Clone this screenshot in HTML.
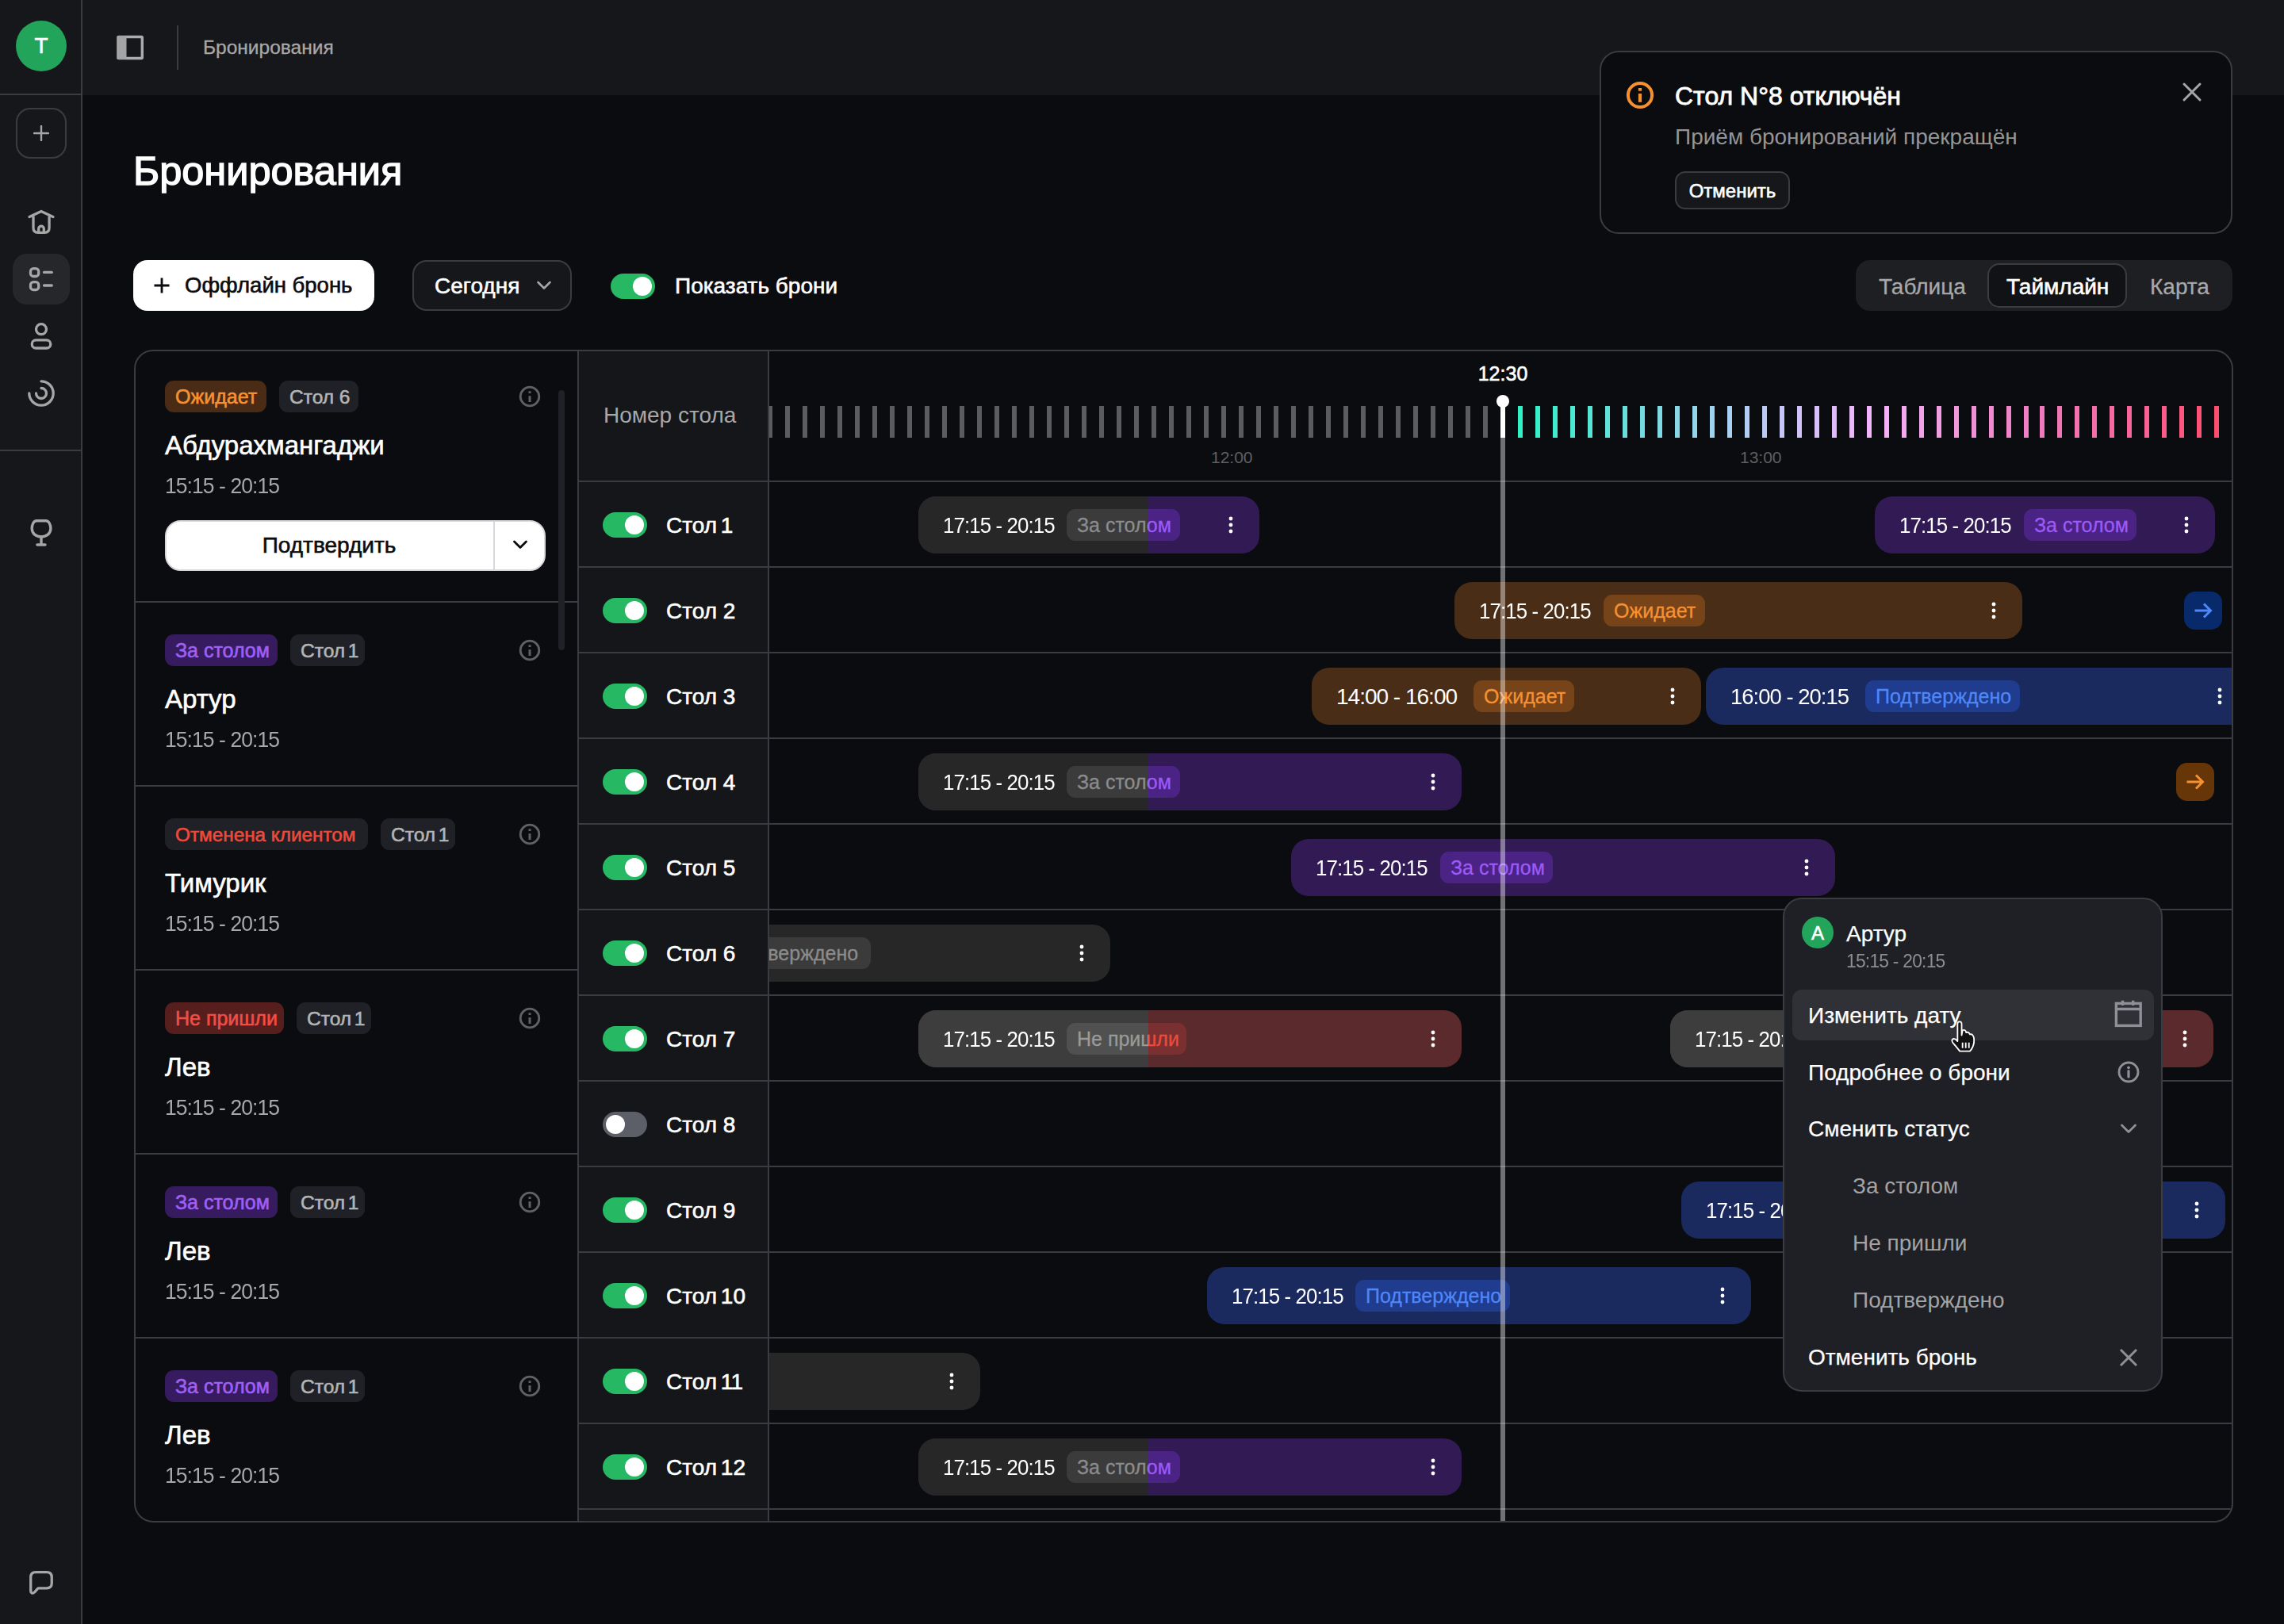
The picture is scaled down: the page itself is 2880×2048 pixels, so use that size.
<!DOCTYPE html>
<html><head><meta charset="utf-8"><style>
html,body{margin:0;padding:0;}
body{width:2880px;height:2048px;overflow:hidden;position:relative;background:#0b0c0f;font-family:"Liberation Sans", sans-serif;}
</style></head><body>
<div style="position:absolute;left:0px;top:0px;width:102px;height:2048px;background:#16171b;"></div>
<div style="position:absolute;left:102px;top:0px;width:2px;height:2048px;background:#3b3c41;"></div>
<div style="position:absolute;left:0px;top:118px;width:102px;height:2px;background:#3b3c41;"></div>
<div style="position:absolute;left:0px;top:567px;width:102px;height:2px;background:#3b3c41;"></div>
<div style="position:absolute;left:20px;top:26px;width:64px;height:64px;background:#22a55b;border-radius:50%;"></div>
<div style="position:absolute;left:-448px;width:1000px;text-align:center;top:44.3px;font-size:28px;line-height:28px;color:#fff;white-space:nowrap;-webkit-text-stroke:0.6px currentColor;">T</div>
<div style="position:absolute;left:20px;top:136px;width:64px;height:64px;box-sizing:border-box;border:2px solid #3b3c41;border-radius:18px;"></div>
<svg style="position:absolute;left:42px;top:158px;" width="20" height="20" viewBox="0 0 20 20" fill="none"><path d="M10 1V19M1 10H19" stroke="#a6a6a6" stroke-width="2.4" stroke-linecap="round"/></svg>
<svg style="position:absolute;left:35px;top:262px;" width="34" height="36" viewBox="0 0 34 36" fill="none"><path d="M2.1 11.6L16.95 4.5L31.9 11.6" stroke="#a6a6a6" stroke-width="3.3" stroke-linecap="round" stroke-linejoin="round"/><path d="M7 10.5V25.3Q7 31.3 13 31.3H21.1Q27.1 31.3 27.1 25.3V10.5" stroke="#a6a6a6" stroke-width="3.3"/><path d="M13.7 31.3V26.4A3.3 3.3 0 0 1 20.3 26.4V31.3" stroke="#a6a6a6" stroke-width="3.3"/></svg>
<div style="position:absolute;left:16px;top:320px;width:72px;height:64px;background:#26272b;border-radius:18px;"></div>
<svg style="position:absolute;left:35px;top:335px;" width="34" height="34" viewBox="0 0 34 34" fill="none"><rect x="3.5" y="3.6" width="10.2" height="9.9" rx="3.6" stroke="#a6a6a6" stroke-width="3.3"/><rect x="3.5" y="20.6" width="10.2" height="9.9" rx="3.6" stroke="#a6a6a6" stroke-width="3.3"/><path d="M20.5 8.4H30.3M20.5 25H30.3" stroke="#a6a6a6" stroke-width="3.3" stroke-linecap="round"/></svg>
<svg style="position:absolute;left:35px;top:405px;" width="34" height="40" viewBox="0 0 34 40" fill="none"><circle cx="17" cy="10.2" r="6.5" stroke="#a6a6a6" stroke-width="3.3"/><rect x="5.25" y="23.9" width="23.5" height="10.1" rx="5" stroke="#a6a6a6" stroke-width="3.3"/></svg>
<svg style="position:absolute;left:33px;top:477px;" width="38" height="38" viewBox="0 0 38 38" fill="none"><path d="M19 3.8A15.2 15.2 0 1 1 3.8 19" stroke="#a6a6a6" stroke-width="3.3" stroke-linecap="round"/><path d="M19 12.5A6.5 6.5 0 1 1 12.5 19" stroke="#a6a6a6" stroke-width="3.3" stroke-linecap="round"/></svg>
<svg style="position:absolute;left:35px;top:652px;" width="34" height="40" viewBox="0 0 34 40" fill="none"><path d="M11 4.75H23C26.5 4.75 28.9 9.5 28.9 14.5C28.9 21 23.5 24.85 17 24.85C10.5 24.85 5.25 21 5.25 14.5C5.25 9.5 7.5 4.75 11 4.75Z" stroke="#a6a6a6" stroke-width="3.4"/><path d="M17 25V35M11.9 35H22" stroke="#a6a6a6" stroke-width="3.4" stroke-linecap="round"/></svg>
<svg style="position:absolute;left:35px;top:1979px;" width="34" height="34" viewBox="0 0 34 34" fill="none"><path d="M3.75 10Q3.75 3.65 10 3.65H24Q30.25 3.65 30.25 10V17.6Q30.25 23.9 24 23.9H14Q13 23.9 12.3 24.7L8.6 28.9Q6.8 30.6 5.2 29.9Q3.75 29.2 3.75 27.4Z" stroke="#a6a6a6" stroke-width="3.3" stroke-linejoin="round"/></svg>
<div style="position:absolute;left:104px;top:0px;width:2776px;height:120px;background:#16171b;"></div>
<svg style="position:absolute;left:145px;top:43px;" width="38" height="34" viewBox="0 0 38 34" fill="none"><rect x="4" y="3.5" width="30.3" height="27" rx="1" stroke="#acacae" stroke-width="3.4"/><rect x="2.5" y="2" width="12" height="30" rx="1" fill="#a4a4a6"/></svg>
<div style="position:absolute;left:223px;top:32px;width:2px;height:56px;background:#3b3c41;"></div>
<div style="position:absolute;left:256px;top:48.3px;font-size:24.5px;line-height:24.5px;color:#a8a8a8;white-space:nowrap;-webkit-text-stroke:0.3px #a8a8a8;">Бронирования</div>
<div style="position:absolute;left:168px;top:190.8px;font-size:50.5px;line-height:50.5px;color:#fff;white-space:nowrap;-webkit-text-stroke:1.4px #fff;">Бронирования</div>
<div style="position:absolute;left:168px;top:328px;width:304px;height:64px;background:#fff;border-radius:18px;"></div>
<svg style="position:absolute;left:193px;top:349px;" width="22" height="22" viewBox="0 0 22 22" fill="none"><path d="M11 1.5V20.5M1.5 11H20.5" stroke="#0b0c0f" stroke-width="2.8"/></svg>
<div style="position:absolute;left:233px;top:346.2px;font-size:27.5px;line-height:27.5px;color:#0b0c0f;white-space:nowrap;-webkit-text-stroke:0.6px #0b0c0f;">Оффлайн бронь</div>
<div style="position:absolute;left:520px;top:328px;width:201px;height:64px;box-sizing:border-box;background:#16171b;border:2px solid #3b3c41;border-radius:18px;"></div>
<div style="position:absolute;left:548px;top:347.3px;font-size:28px;line-height:28px;color:#fff;white-space:nowrap;-webkit-text-stroke:0.6px currentColor;">Сегодня</div>
<svg style="position:absolute;left:676px;top:353px;" width="20" height="14" viewBox="0 0 20 14" fill="none"><path d="M2.5 3L10 10.5L17.5 3" stroke="#a6a6a6" stroke-width="2.6" stroke-linecap="round" stroke-linejoin="round"/></svg>
<div style="position:absolute;left:770px;top:345px;width:56px;height:32px;background:#27b864;border-radius:16px;"></div>
<div style="position:absolute;left:798px;top:349px;width:24px;height:24px;background:#fff;border-radius:50%;"></div>
<div style="position:absolute;left:851px;top:347.3px;font-size:28px;line-height:28px;color:#fff;white-space:nowrap;-webkit-text-stroke:0.6px currentColor;">Показать брони</div>
<div style="position:absolute;left:2340px;top:328px;width:475px;height:64px;background:#1e1f23;border-radius:18px;"></div>
<div style="position:absolute;left:2506px;top:332px;width:176px;height:56px;box-sizing:border-box;background:#111216;border:2px solid #3b3c41;border-radius:15px;"></div>
<div style="position:absolute;left:2369px;top:347.6px;font-size:28px;line-height:28px;color:#a8a8a8;white-space:nowrap;-webkit-text-stroke:0.3px #a8a8a8;">Таблица</div>
<div style="position:absolute;left:2530px;top:347.6px;font-size:28px;line-height:28px;color:#fff;white-space:nowrap;-webkit-text-stroke:0.6px currentColor;">Таймлайн</div>
<div style="position:absolute;left:2711px;top:347.6px;font-size:28px;line-height:28px;color:#a8a8a8;white-space:nowrap;-webkit-text-stroke:0.3px #a8a8a8;">Карта</div>
<div style="position:absolute;left:2017px;top:64px;width:798px;height:231px;box-sizing:border-box;background:#0b0c0f;border:2px solid #3b3c41;border-radius:24px;"></div>
<svg style="position:absolute;left:2050px;top:102px;" width="36" height="36" viewBox="0 0 36 36" fill="none"><circle cx="18" cy="18" r="15.1" stroke="#f7912f" stroke-width="4"/><path d="M18 16V26.8" stroke="#f7912f" stroke-width="4.2"/><rect x="15.9" y="9" width="4.2" height="3.7" fill="#f7912f"/></svg>
<div style="position:absolute;left:2112px;top:104.7px;font-size:32px;line-height:32px;color:#fff;white-space:nowrap;-webkit-text-stroke:0.8px #fff;">Стол N°8 отключён</div>
<svg style="position:absolute;left:2751px;top:103px;" width="26" height="26" viewBox="0 0 26 26" fill="none"><path d="M3 3L23 23M23 3L3 23" stroke="#a6a6a6" stroke-width="3" stroke-linecap="round"/></svg>
<div style="position:absolute;left:2112px;top:159.3px;font-size:28px;line-height:28px;color:#959595;white-space:nowrap;">Приём бронирований прекращён</div>
<div style="position:absolute;left:2112px;top:216px;width:145px;height:48px;box-sizing:border-box;background:#16171b;border:2px solid #3b3c41;border-radius:13px;"></div>
<div style="position:absolute;left:1684.5px;width:1000px;text-align:center;top:228.7px;font-size:24px;line-height:24px;color:#fff;white-space:nowrap;-webkit-text-stroke:0.6px currentColor;">Отменить</div>
<div style="position:absolute;left:169px;top:441px;width:2647px;height:1479px;box-sizing:border-box;border:2px solid #3b3c41;border-radius:24px;overflow:hidden;">
<div style="position:absolute;left:558px;top:-2px;width:240px;height:1479px;background:#15161a;"></div>
<div style="position:absolute;left:557px;top:-2px;width:2px;height:1479px;background:#3b3c41;"></div>
<div style="position:absolute;left:797px;top:-2px;width:2px;height:1479px;background:#3b3c41;"></div>
<div style="position:absolute;left:558px;top:163px;width:2100px;height:2px;background:#3b3c41;"></div>
<div style="position:absolute;left:558px;top:271px;width:2100px;height:2px;background:#3b3c41;"></div>
<div style="position:absolute;left:558px;top:379px;width:2100px;height:2px;background:#3b3c41;"></div>
<div style="position:absolute;left:558px;top:487px;width:2100px;height:2px;background:#3b3c41;"></div>
<div style="position:absolute;left:558px;top:595px;width:2100px;height:2px;background:#3b3c41;"></div>
<div style="position:absolute;left:558px;top:703px;width:2100px;height:2px;background:#3b3c41;"></div>
<div style="position:absolute;left:558px;top:811px;width:2100px;height:2px;background:#3b3c41;"></div>
<div style="position:absolute;left:558px;top:919px;width:2100px;height:2px;background:#3b3c41;"></div>
<div style="position:absolute;left:558px;top:1027px;width:2100px;height:2px;background:#3b3c41;"></div>
<div style="position:absolute;left:558px;top:1135px;width:2100px;height:2px;background:#3b3c41;"></div>
<div style="position:absolute;left:558px;top:1243px;width:2100px;height:2px;background:#3b3c41;"></div>
<div style="position:absolute;left:558px;top:1351px;width:2100px;height:2px;background:#3b3c41;"></div>
<div style="position:absolute;left:558px;top:1459px;width:2100px;height:2px;background:#3b3c41;"></div>
<div style="position:absolute;left:590px;top:67.3px;font-size:28px;line-height:28px;color:#a8a8a8;white-space:nowrap;">Номер стола</div>
<div style="position:absolute;left:37px;top:37px;height:40px;width:128px;padding:0 13px;box-sizing:border-box;background:#4a2c16;border-radius:11px;color:#f7912f;font-size:25px;line-height:41px;white-space:nowrap;-webkit-text-stroke:0.6px currentColor;">Ожидает</div>
<div style="position:absolute;left:181px;top:37px;height:40px;width:100px;padding:0 13px;box-sizing:border-box;background:#1f2126;border-radius:11px;color:#b4b4b4;font-size:24.5px;line-height:41px;white-space:nowrap;-webkit-text-stroke:0.6px currentColor;">Стол 6</div>
<svg style="position:absolute;left:481px;top:41px;" width="32" height="32" viewBox="0 0 32 32" fill="none"><circle cx="16" cy="16" r="11.8" stroke="#606164" stroke-width="2.8"/><path d="M16 15.2V23" stroke="#606164" stroke-width="3"/><rect x="14.5" y="9.3" width="3" height="2.7" fill="#606164"/></svg>
<div style="position:absolute;left:37px;top:101.6px;font-size:33px;line-height:33px;color:#fff;white-space:nowrap;-webkit-text-stroke:0.6px currentColor;">Абдурахмангаджи</div>
<div style="position:absolute;left:37px;top:154.9px;font-size:28.5px;line-height:28.5px;color:#a8a8a8;white-space:nowrap;letter-spacing:-1px;transform:scaleX(0.93);transform-origin:0 0;">15:15 - 20:15</div>
<div style="position:absolute;left:37px;top:357px;height:40px;width:142px;padding:0 13px;box-sizing:border-box;background:#361c5e;border-radius:11px;color:#9f5ff6;font-size:25px;line-height:41px;white-space:nowrap;-webkit-text-stroke:0.6px currentColor;">За столом</div>
<div style="position:absolute;left:195px;top:357px;height:40px;width:94px;padding:0 13px;box-sizing:border-box;background:#1f2126;border-radius:11px;color:#b4b4b4;font-size:24.5px;line-height:41px;white-space:nowrap;-webkit-text-stroke:0.6px currentColor;">Стол <span style="margin-left:-3px">1</span></div>
<svg style="position:absolute;left:481px;top:361px;" width="32" height="32" viewBox="0 0 32 32" fill="none"><circle cx="16" cy="16" r="11.8" stroke="#606164" stroke-width="2.8"/><path d="M16 15.2V23" stroke="#606164" stroke-width="3"/><rect x="14.5" y="9.3" width="3" height="2.7" fill="#606164"/></svg>
<div style="position:absolute;left:37px;top:421.6px;font-size:33px;line-height:33px;color:#fff;white-space:nowrap;-webkit-text-stroke:0.6px currentColor;">Артур</div>
<div style="position:absolute;left:37px;top:474.9px;font-size:28.5px;line-height:28.5px;color:#a8a8a8;white-space:nowrap;letter-spacing:-1px;transform:scaleX(0.93);transform-origin:0 0;">15:15 - 20:15</div>
<div style="position:absolute;left:-2px;top:315px;width:560px;height:2px;background:#3b3c41;"></div>
<div style="position:absolute;left:37px;top:589px;height:40px;width:256px;padding:0 13px;box-sizing:border-box;background:#1f2126;border-radius:11px;color:#ee4a3c;font-size:24.3px;line-height:41px;white-space:nowrap;-webkit-text-stroke:0.6px currentColor;">Отменена клиентом</div>
<div style="position:absolute;left:309px;top:589px;height:40px;width:94px;padding:0 13px;box-sizing:border-box;background:#1f2126;border-radius:11px;color:#b4b4b4;font-size:24.5px;line-height:41px;white-space:nowrap;-webkit-text-stroke:0.6px currentColor;">Стол <span style="margin-left:-3px">1</span></div>
<svg style="position:absolute;left:481px;top:593px;" width="32" height="32" viewBox="0 0 32 32" fill="none"><circle cx="16" cy="16" r="11.8" stroke="#606164" stroke-width="2.8"/><path d="M16 15.2V23" stroke="#606164" stroke-width="3"/><rect x="14.5" y="9.3" width="3" height="2.7" fill="#606164"/></svg>
<div style="position:absolute;left:37px;top:653.6px;font-size:33px;line-height:33px;color:#fff;white-space:nowrap;-webkit-text-stroke:0.6px currentColor;">Тимурик</div>
<div style="position:absolute;left:37px;top:706.9px;font-size:28.5px;line-height:28.5px;color:#a8a8a8;white-space:nowrap;letter-spacing:-1px;transform:scaleX(0.93);transform-origin:0 0;">15:15 - 20:15</div>
<div style="position:absolute;left:-2px;top:547px;width:560px;height:2px;background:#3b3c41;"></div>
<div style="position:absolute;left:37px;top:821px;height:40px;width:150px;padding:0 13px;box-sizing:border-box;background:#561f1e;border-radius:11px;color:#f24d45;font-size:25px;line-height:41px;white-space:nowrap;-webkit-text-stroke:0.6px currentColor;">Не пришли</div>
<div style="position:absolute;left:203px;top:821px;height:40px;width:94px;padding:0 13px;box-sizing:border-box;background:#1f2126;border-radius:11px;color:#b4b4b4;font-size:24.5px;line-height:41px;white-space:nowrap;-webkit-text-stroke:0.6px currentColor;">Стол <span style="margin-left:-3px">1</span></div>
<svg style="position:absolute;left:481px;top:825px;" width="32" height="32" viewBox="0 0 32 32" fill="none"><circle cx="16" cy="16" r="11.8" stroke="#606164" stroke-width="2.8"/><path d="M16 15.2V23" stroke="#606164" stroke-width="3"/><rect x="14.5" y="9.3" width="3" height="2.7" fill="#606164"/></svg>
<div style="position:absolute;left:37px;top:885.6px;font-size:33px;line-height:33px;color:#fff;white-space:nowrap;-webkit-text-stroke:0.6px currentColor;">Лев</div>
<div style="position:absolute;left:37px;top:938.9px;font-size:28.5px;line-height:28.5px;color:#a8a8a8;white-space:nowrap;letter-spacing:-1px;transform:scaleX(0.93);transform-origin:0 0;">15:15 - 20:15</div>
<div style="position:absolute;left:-2px;top:779px;width:560px;height:2px;background:#3b3c41;"></div>
<div style="position:absolute;left:37px;top:1053px;height:40px;width:142px;padding:0 13px;box-sizing:border-box;background:#361c5e;border-radius:11px;color:#9f5ff6;font-size:25px;line-height:41px;white-space:nowrap;-webkit-text-stroke:0.6px currentColor;">За столом</div>
<div style="position:absolute;left:195px;top:1053px;height:40px;width:94px;padding:0 13px;box-sizing:border-box;background:#1f2126;border-radius:11px;color:#b4b4b4;font-size:24.5px;line-height:41px;white-space:nowrap;-webkit-text-stroke:0.6px currentColor;">Стол <span style="margin-left:-3px">1</span></div>
<svg style="position:absolute;left:481px;top:1057px;" width="32" height="32" viewBox="0 0 32 32" fill="none"><circle cx="16" cy="16" r="11.8" stroke="#606164" stroke-width="2.8"/><path d="M16 15.2V23" stroke="#606164" stroke-width="3"/><rect x="14.5" y="9.3" width="3" height="2.7" fill="#606164"/></svg>
<div style="position:absolute;left:37px;top:1117.6px;font-size:33px;line-height:33px;color:#fff;white-space:nowrap;-webkit-text-stroke:0.6px currentColor;">Лев</div>
<div style="position:absolute;left:37px;top:1170.9px;font-size:28.5px;line-height:28.5px;color:#a8a8a8;white-space:nowrap;letter-spacing:-1px;transform:scaleX(0.93);transform-origin:0 0;">15:15 - 20:15</div>
<div style="position:absolute;left:-2px;top:1011px;width:560px;height:2px;background:#3b3c41;"></div>
<div style="position:absolute;left:37px;top:1285px;height:40px;width:142px;padding:0 13px;box-sizing:border-box;background:#361c5e;border-radius:11px;color:#9f5ff6;font-size:25px;line-height:41px;white-space:nowrap;-webkit-text-stroke:0.6px currentColor;">За столом</div>
<div style="position:absolute;left:195px;top:1285px;height:40px;width:94px;padding:0 13px;box-sizing:border-box;background:#1f2126;border-radius:11px;color:#b4b4b4;font-size:24.5px;line-height:41px;white-space:nowrap;-webkit-text-stroke:0.6px currentColor;">Стол <span style="margin-left:-3px">1</span></div>
<svg style="position:absolute;left:481px;top:1289px;" width="32" height="32" viewBox="0 0 32 32" fill="none"><circle cx="16" cy="16" r="11.8" stroke="#606164" stroke-width="2.8"/><path d="M16 15.2V23" stroke="#606164" stroke-width="3"/><rect x="14.5" y="9.3" width="3" height="2.7" fill="#606164"/></svg>
<div style="position:absolute;left:37px;top:1349.6px;font-size:33px;line-height:33px;color:#fff;white-space:nowrap;-webkit-text-stroke:0.6px currentColor;">Лев</div>
<div style="position:absolute;left:37px;top:1402.9px;font-size:28.5px;line-height:28.5px;color:#a8a8a8;white-space:nowrap;letter-spacing:-1px;transform:scaleX(0.93);transform-origin:0 0;">15:15 - 20:15</div>
<div style="position:absolute;left:-2px;top:1243px;width:560px;height:2px;background:#3b3c41;"></div>
<div style="position:absolute;left:37px;top:213px;width:480px;height:64px;box-sizing:border-box;background:#fff;border:2px solid #d8d8dc;border-radius:20px;"></div>
<div style="position:absolute;left:451px;top:215px;width:2px;height:60px;background:#d8d8dc;"></div>
<div style="position:absolute;left:-256px;width:1000px;text-align:center;top:231.3px;font-size:28px;line-height:28px;color:#0b0c0f;white-space:nowrap;-webkit-text-stroke:0.6px #0b0c0f;">Подтвердить</div>
<svg style="position:absolute;left:475px;top:237px;" width="20" height="14" viewBox="0 0 20 14" fill="none"><path d="M2.5 3L10 10.5L17.5 3" stroke="#0b0c0f" stroke-width="2.8" stroke-linecap="round" stroke-linejoin="round"/></svg>
<div style="position:absolute;left:533px;top:49px;width:8px;height:328px;background:#1f2126;border-radius:4px;"></div>
<div style="position:absolute;left:589px;top:203px;width:56px;height:32px;background:#27b864;border-radius:16px;"></div>
<div style="position:absolute;left:617px;top:207px;width:24px;height:24px;background:#fff;border-radius:50%;"></div>
<div style="position:absolute;left:669px;top:206.3px;font-size:28px;line-height:28px;color:#fff;white-space:nowrap;-webkit-text-stroke:0.6px currentColor;">Стол <span style="margin-left:-3px">1</span></div>
<div style="position:absolute;left:589px;top:311px;width:56px;height:32px;background:#27b864;border-radius:16px;"></div>
<div style="position:absolute;left:617px;top:315px;width:24px;height:24px;background:#fff;border-radius:50%;"></div>
<div style="position:absolute;left:669px;top:314.3px;font-size:28px;line-height:28px;color:#fff;white-space:nowrap;-webkit-text-stroke:0.6px currentColor;">Стол 2</div>
<div style="position:absolute;left:589px;top:419px;width:56px;height:32px;background:#27b864;border-radius:16px;"></div>
<div style="position:absolute;left:617px;top:423px;width:24px;height:24px;background:#fff;border-radius:50%;"></div>
<div style="position:absolute;left:669px;top:422.3px;font-size:28px;line-height:28px;color:#fff;white-space:nowrap;-webkit-text-stroke:0.6px currentColor;">Стол 3</div>
<div style="position:absolute;left:589px;top:527px;width:56px;height:32px;background:#27b864;border-radius:16px;"></div>
<div style="position:absolute;left:617px;top:531px;width:24px;height:24px;background:#fff;border-radius:50%;"></div>
<div style="position:absolute;left:669px;top:530.3px;font-size:28px;line-height:28px;color:#fff;white-space:nowrap;-webkit-text-stroke:0.6px currentColor;">Стол 4</div>
<div style="position:absolute;left:589px;top:635px;width:56px;height:32px;background:#27b864;border-radius:16px;"></div>
<div style="position:absolute;left:617px;top:639px;width:24px;height:24px;background:#fff;border-radius:50%;"></div>
<div style="position:absolute;left:669px;top:638.3px;font-size:28px;line-height:28px;color:#fff;white-space:nowrap;-webkit-text-stroke:0.6px currentColor;">Стол 5</div>
<div style="position:absolute;left:589px;top:743px;width:56px;height:32px;background:#27b864;border-radius:16px;"></div>
<div style="position:absolute;left:617px;top:747px;width:24px;height:24px;background:#fff;border-radius:50%;"></div>
<div style="position:absolute;left:669px;top:746.3px;font-size:28px;line-height:28px;color:#fff;white-space:nowrap;-webkit-text-stroke:0.6px currentColor;">Стол 6</div>
<div style="position:absolute;left:589px;top:851px;width:56px;height:32px;background:#27b864;border-radius:16px;"></div>
<div style="position:absolute;left:617px;top:855px;width:24px;height:24px;background:#fff;border-radius:50%;"></div>
<div style="position:absolute;left:669px;top:854.3px;font-size:28px;line-height:28px;color:#fff;white-space:nowrap;-webkit-text-stroke:0.6px currentColor;">Стол 7</div>
<div style="position:absolute;left:589px;top:959px;width:56px;height:32px;background:#5c5f68;border-radius:16px;"></div>
<div style="position:absolute;left:593px;top:963px;width:24px;height:24px;background:#fff;border-radius:50%;"></div>
<div style="position:absolute;left:669px;top:962.3px;font-size:28px;line-height:28px;color:#fff;white-space:nowrap;-webkit-text-stroke:0.6px currentColor;">Стол 8</div>
<div style="position:absolute;left:589px;top:1067px;width:56px;height:32px;background:#27b864;border-radius:16px;"></div>
<div style="position:absolute;left:617px;top:1071px;width:24px;height:24px;background:#fff;border-radius:50%;"></div>
<div style="position:absolute;left:669px;top:1070.3px;font-size:28px;line-height:28px;color:#fff;white-space:nowrap;-webkit-text-stroke:0.6px currentColor;">Стол 9</div>
<div style="position:absolute;left:589px;top:1175px;width:56px;height:32px;background:#27b864;border-radius:16px;"></div>
<div style="position:absolute;left:617px;top:1179px;width:24px;height:24px;background:#fff;border-radius:50%;"></div>
<div style="position:absolute;left:669px;top:1178.3px;font-size:28px;line-height:28px;color:#fff;white-space:nowrap;-webkit-text-stroke:0.6px currentColor;">Стол <span style="margin-left:-3px">1</span>0</div>
<div style="position:absolute;left:589px;top:1283px;width:56px;height:32px;background:#27b864;border-radius:16px;"></div>
<div style="position:absolute;left:617px;top:1287px;width:24px;height:24px;background:#fff;border-radius:50%;"></div>
<div style="position:absolute;left:669px;top:1286.3px;font-size:28px;line-height:28px;color:#fff;white-space:nowrap;-webkit-text-stroke:0.6px currentColor;">Стол <span style="margin-left:-3px">1</span><span style="margin-left:-3px">1</span></div>
<div style="position:absolute;left:589px;top:1391px;width:56px;height:32px;background:#27b864;border-radius:16px;"></div>
<div style="position:absolute;left:617px;top:1395px;width:24px;height:24px;background:#fff;border-radius:50%;"></div>
<div style="position:absolute;left:669px;top:1394.3px;font-size:28px;line-height:28px;color:#fff;white-space:nowrap;-webkit-text-stroke:0.6px currentColor;">Стол <span style="margin-left:-3px">1</span>2</div>
<div style="position:absolute;left:799px;top:-2px;width:1844px;height:1477px;overflow:hidden;">
<div style="position:absolute;left:-2px;top:71px;width:924px;height:40px;background:repeating-linear-gradient(to right,#5b5c5e 0 6px,transparent 6px 22px);"></div>
<div style="position:absolute;left:944px;top:71px;width:646px;height:40px;background:linear-gradient(to right,#2ef2c6 0px,#6fdde0 150px,#a6d2f2 260px,#d2c2f8 360px,#f5b3fa 450px,#f07cc0 650px,#f86294 790px,#ff4866 902px);background-size:902px 40px;-webkit-mask-image:repeating-linear-gradient(to right,#000 0 6px,transparent 6px 22px);"></div>
<div style="position:absolute;left:1602px;top:71px;width:244px;height:40px;background:linear-gradient(to right,#2ef2c6 0px,#6fdde0 150px,#a6d2f2 260px,#d2c2f8 360px,#f5b3fa 450px,#f07cc0 650px,#f86294 790px,#ff4866 902px);background-size:902px 40px;background-position:-658px 0;-webkit-mask-image:repeating-linear-gradient(to right,#000 0 6px,transparent 6px 22px);"></div>
<div style="position:absolute;left:557px;top:125.2px;font-size:21px;line-height:21px;color:#5e5f61;white-space:nowrap;">12:00</div>
<div style="position:absolute;left:1224px;top:125.2px;font-size:21px;line-height:21px;color:#5e5f61;white-space:nowrap;">13:00</div>
<div style="position:absolute;left:188px;top:185px;width:430px;height:72px;"><div style="position:absolute;left:0;top:0;width:430px;height:72px;background:#321a55;border-radius:22px;"></div><div style="position:absolute;left:31px;top:23.3px;font-size:28px;line-height:28px;color:#fff;white-space:nowrap;letter-spacing:-1px;transform:scaleX(0.925);transform-origin:0 0;">17:15 - 20:15</div><div style="position:absolute;left:187px;top:16px;height:40px;width:143px;padding:0 13px;box-sizing:border-box;background:#4b2385;border-radius:11px;color:#9c5af7;font-size:25px;line-height:41px;white-space:nowrap;-webkit-text-stroke:0.3px currentColor;">За столом</div><svg style="position:absolute;left:390px;top:24px" width="8" height="24" viewBox="0 0 8 24"><circle cx="4" cy="4" r="2.45" fill="#fff"/><circle cx="4" cy="12" r="2.45" fill="#fff"/><circle cx="4" cy="20" r="2.45" fill="#fff"/></svg>
<div style="position:absolute;left:0;top:0;width:430px;height:72px;clip-path:inset(0 140px 0 0);"><div style="position:absolute;left:0;top:0;width:430px;height:72px;background:#272727;border-radius:22px;"></div><div style="position:absolute;left:31px;top:23.3px;font-size:28px;line-height:28px;color:#fff;white-space:nowrap;letter-spacing:-1px;transform:scaleX(0.925);transform-origin:0 0;">17:15 - 20:15</div><div style="position:absolute;left:187px;top:16px;height:40px;width:143px;padding:0 13px;box-sizing:border-box;background:#3b3b3b;border-radius:11px;color:#8c8c8c;font-size:25px;line-height:41px;white-space:nowrap;-webkit-text-stroke:0.3px currentColor;">За столом</div><svg style="position:absolute;left:390px;top:24px" width="8" height="24" viewBox="0 0 8 24"><circle cx="4" cy="4" r="2.45" fill="#fff"/><circle cx="4" cy="12" r="2.45" fill="#fff"/><circle cx="4" cy="20" r="2.45" fill="#fff"/></svg></div>
</div>
<div style="position:absolute;left:1394px;top:185px;width:429px;height:72px;"><div style="position:absolute;left:0;top:0;width:429px;height:72px;background:#321a55;border-radius:22px;"></div><div style="position:absolute;left:31px;top:23.3px;font-size:28px;line-height:28px;color:#fff;white-space:nowrap;letter-spacing:-1px;transform:scaleX(0.925);transform-origin:0 0;">17:15 - 20:15</div><div style="position:absolute;left:188px;top:16px;height:40px;width:142px;padding:0 13px;box-sizing:border-box;background:#4b2385;border-radius:11px;color:#9c5af7;font-size:25px;line-height:41px;white-space:nowrap;-webkit-text-stroke:0.3px currentColor;">За столом</div><svg style="position:absolute;left:389px;top:24px" width="8" height="24" viewBox="0 0 8 24"><circle cx="4" cy="4" r="2.45" fill="#fff"/><circle cx="4" cy="12" r="2.45" fill="#fff"/><circle cx="4" cy="20" r="2.45" fill="#fff"/></svg>
</div>
<div style="position:absolute;left:864px;top:293px;width:716px;height:72px;"><div style="position:absolute;left:0;top:0;width:716px;height:72px;background:#4a2d16;border-radius:22px;"></div><div style="position:absolute;left:31px;top:23.3px;font-size:28px;line-height:28px;color:#fff;white-space:nowrap;letter-spacing:-1px;transform:scaleX(0.925);transform-origin:0 0;">17:15 - 20:15</div><div style="position:absolute;left:188px;top:16px;height:40px;width:128px;padding:0 13px;box-sizing:border-box;background:#774318;border-radius:11px;color:#f7912f;font-size:25px;line-height:41px;white-space:nowrap;-webkit-text-stroke:0.3px currentColor;">Ожидает</div><svg style="position:absolute;left:676px;top:24px" width="8" height="24" viewBox="0 0 8 24"><circle cx="4" cy="4" r="2.45" fill="#fff"/><circle cx="4" cy="12" r="2.45" fill="#fff"/><circle cx="4" cy="20" r="2.45" fill="#fff"/></svg>
</div>
<div style="position:absolute;left:684px;top:401px;width:491px;height:72px;"><div style="position:absolute;left:0;top:0;width:491px;height:72px;background:#4a2d16;border-radius:22px;"></div><div style="position:absolute;left:31px;top:23.3px;font-size:28px;line-height:28px;color:#fff;white-space:nowrap;letter-spacing:-1px;transform:scaleX(1.0);transform-origin:0 0;">14:00 - 16:00</div><div style="position:absolute;left:204px;top:16px;height:40px;width:127px;padding:0 13px;box-sizing:border-box;background:#774318;border-radius:11px;color:#f7912f;font-size:25px;line-height:41px;white-space:nowrap;-webkit-text-stroke:0.3px currentColor;">Ожидает</div><svg style="position:absolute;left:451px;top:24px" width="8" height="24" viewBox="0 0 8 24"><circle cx="4" cy="4" r="2.45" fill="#fff"/><circle cx="4" cy="12" r="2.45" fill="#fff"/><circle cx="4" cy="20" r="2.45" fill="#fff"/></svg>
</div>
<div style="position:absolute;left:1181px;top:401px;width:684px;height:72px;"><div style="position:absolute;left:0;top:0;width:684px;height:72px;background:#1b2a5e;border-radius:22px;"></div><div style="position:absolute;left:31px;top:23.3px;font-size:28px;line-height:28px;color:#fff;white-space:nowrap;letter-spacing:-1px;transform:scaleX(0.98);transform-origin:0 0;">16:00 - 20:15</div><div style="position:absolute;left:201px;top:16px;height:40px;width:195px;padding:0 13px;box-sizing:border-box;background:#1f3c8f;border-radius:11px;color:#4f87f8;font-size:25px;line-height:41px;white-space:nowrap;-webkit-text-stroke:0.3px currentColor;">Подтверждено</div><svg style="position:absolute;left:644px;top:24px" width="8" height="24" viewBox="0 0 8 24"><circle cx="4" cy="4" r="2.45" fill="#fff"/><circle cx="4" cy="12" r="2.45" fill="#fff"/><circle cx="4" cy="20" r="2.45" fill="#fff"/></svg>
</div>
<div style="position:absolute;left:188px;top:509px;width:685px;height:72px;"><div style="position:absolute;left:0;top:0;width:685px;height:72px;background:#321a55;border-radius:22px;"></div><div style="position:absolute;left:31px;top:23.3px;font-size:28px;line-height:28px;color:#fff;white-space:nowrap;letter-spacing:-1px;transform:scaleX(0.925);transform-origin:0 0;">17:15 - 20:15</div><div style="position:absolute;left:187px;top:16px;height:40px;width:143px;padding:0 13px;box-sizing:border-box;background:#4b2385;border-radius:11px;color:#9c5af7;font-size:25px;line-height:41px;white-space:nowrap;-webkit-text-stroke:0.3px currentColor;">За столом</div><svg style="position:absolute;left:645px;top:24px" width="8" height="24" viewBox="0 0 8 24"><circle cx="4" cy="4" r="2.45" fill="#fff"/><circle cx="4" cy="12" r="2.45" fill="#fff"/><circle cx="4" cy="20" r="2.45" fill="#fff"/></svg>
<div style="position:absolute;left:0;top:0;width:685px;height:72px;clip-path:inset(0 395px 0 0);"><div style="position:absolute;left:0;top:0;width:685px;height:72px;background:#272727;border-radius:22px;"></div><div style="position:absolute;left:31px;top:23.3px;font-size:28px;line-height:28px;color:#fff;white-space:nowrap;letter-spacing:-1px;transform:scaleX(0.925);transform-origin:0 0;">17:15 - 20:15</div><div style="position:absolute;left:187px;top:16px;height:40px;width:143px;padding:0 13px;box-sizing:border-box;background:#3b3b3b;border-radius:11px;color:#8c8c8c;font-size:25px;line-height:41px;white-space:nowrap;-webkit-text-stroke:0.3px currentColor;">За столом</div><svg style="position:absolute;left:645px;top:24px" width="8" height="24" viewBox="0 0 8 24"><circle cx="4" cy="4" r="2.45" fill="#fff"/><circle cx="4" cy="12" r="2.45" fill="#fff"/><circle cx="4" cy="20" r="2.45" fill="#fff"/></svg></div>
</div>
<div style="position:absolute;left:658px;top:617px;width:686px;height:72px;"><div style="position:absolute;left:0;top:0;width:686px;height:72px;background:#321a55;border-radius:22px;"></div><div style="position:absolute;left:31px;top:23.3px;font-size:28px;line-height:28px;color:#fff;white-space:nowrap;letter-spacing:-1px;transform:scaleX(0.925);transform-origin:0 0;">17:15 - 20:15</div><div style="position:absolute;left:188px;top:16px;height:40px;width:142px;padding:0 13px;box-sizing:border-box;background:#4b2385;border-radius:11px;color:#9c5af7;font-size:25px;line-height:41px;white-space:nowrap;-webkit-text-stroke:0.3px currentColor;">За столом</div><svg style="position:absolute;left:646px;top:24px" width="8" height="24" viewBox="0 0 8 24"><circle cx="4" cy="4" r="2.45" fill="#fff"/><circle cx="4" cy="12" r="2.45" fill="#fff"/><circle cx="4" cy="20" r="2.45" fill="#fff"/></svg>
</div>
<div style="position:absolute;left:-259px;top:725px;width:689px;height:72px;"><div style="position:absolute;left:0;top:0;width:689px;height:72px;background:#272727;border-radius:22px;"></div><div style="position:absolute;left:31px;top:23.3px;font-size:28px;line-height:28px;color:#fff;white-space:nowrap;letter-spacing:-1px;transform:scaleX(0.925);transform-origin:0 0;">17:15 - 20:15</div><div style="position:absolute;left:187px;top:16px;height:40px;width:200px;padding:0 13px;box-sizing:border-box;background:#3b3b3b;border-radius:11px;color:#8c8c8c;font-size:25px;line-height:41px;white-space:nowrap;-webkit-text-stroke:0.3px currentColor;">Подтверждено</div><svg style="position:absolute;left:649px;top:24px" width="8" height="24" viewBox="0 0 8 24"><circle cx="4" cy="4" r="2.45" fill="#fff"/><circle cx="4" cy="12" r="2.45" fill="#fff"/><circle cx="4" cy="20" r="2.45" fill="#fff"/></svg>
</div>
<div style="position:absolute;left:188px;top:833px;width:685px;height:72px;"><div style="position:absolute;left:0;top:0;width:685px;height:72px;background:#5b2a2c;border-radius:22px;"></div><div style="position:absolute;left:31px;top:23.3px;font-size:28px;line-height:28px;color:#fff;white-space:nowrap;letter-spacing:-1px;transform:scaleX(0.925);transform-origin:0 0;">17:15 - 20:15</div><div style="position:absolute;left:187px;top:16px;height:40px;width:151px;padding:0 13px;box-sizing:border-box;background:#7a3030;border-radius:11px;color:#ee4a3c;font-size:25px;line-height:41px;white-space:nowrap;-webkit-text-stroke:0.3px currentColor;">Не пришли</div><svg style="position:absolute;left:645px;top:24px" width="8" height="24" viewBox="0 0 8 24"><circle cx="4" cy="4" r="2.45" fill="#fff"/><circle cx="4" cy="12" r="2.45" fill="#fff"/><circle cx="4" cy="20" r="2.45" fill="#fff"/></svg>
<div style="position:absolute;left:0;top:0;width:685px;height:72px;clip-path:inset(0 395px 0 0);"><div style="position:absolute;left:0;top:0;width:685px;height:72px;background:#3d3d3d;border-radius:22px;"></div><div style="position:absolute;left:31px;top:23.3px;font-size:28px;line-height:28px;color:#fff;white-space:nowrap;letter-spacing:-1px;transform:scaleX(0.925);transform-origin:0 0;">17:15 - 20:15</div><div style="position:absolute;left:187px;top:16px;height:40px;width:151px;padding:0 13px;box-sizing:border-box;background:#505050;border-radius:11px;color:#9a9a9a;font-size:25px;line-height:41px;white-space:nowrap;-webkit-text-stroke:0.3px currentColor;">Не пришли</div><svg style="position:absolute;left:645px;top:24px" width="8" height="24" viewBox="0 0 8 24"><circle cx="4" cy="4" r="2.45" fill="#fff"/><circle cx="4" cy="12" r="2.45" fill="#fff"/><circle cx="4" cy="20" r="2.45" fill="#fff"/></svg></div>
</div>
<div style="position:absolute;left:1136px;top:833px;width:685px;height:72px;"><div style="position:absolute;left:0;top:0;width:685px;height:72px;background:#5b2a2c;border-radius:22px;"></div><div style="position:absolute;left:31px;top:23.3px;font-size:28px;line-height:28px;color:#fff;white-space:nowrap;letter-spacing:-1px;transform:scaleX(0.925);transform-origin:0 0;">17:15 - 20:15</div><div style="position:absolute;left:187px;top:16px;height:40px;width:151px;padding:0 13px;box-sizing:border-box;background:#7a3030;border-radius:11px;color:#ee4a3c;font-size:25px;line-height:41px;white-space:nowrap;-webkit-text-stroke:0.3px currentColor;">Не пришли</div><svg style="position:absolute;left:645px;top:24px" width="8" height="24" viewBox="0 0 8 24"><circle cx="4" cy="4" r="2.45" fill="#fff"/><circle cx="4" cy="12" r="2.45" fill="#fff"/><circle cx="4" cy="20" r="2.45" fill="#fff"/></svg>
<div style="position:absolute;left:0;top:0;width:685px;height:72px;clip-path:inset(0 395px 0 0);"><div style="position:absolute;left:0;top:0;width:685px;height:72px;background:#3d3d3d;border-radius:22px;"></div><div style="position:absolute;left:31px;top:23.3px;font-size:28px;line-height:28px;color:#fff;white-space:nowrap;letter-spacing:-1px;transform:scaleX(0.925);transform-origin:0 0;">17:15 - 20:15</div><div style="position:absolute;left:187px;top:16px;height:40px;width:151px;padding:0 13px;box-sizing:border-box;background:#505050;border-radius:11px;color:#9a9a9a;font-size:25px;line-height:41px;white-space:nowrap;-webkit-text-stroke:0.3px currentColor;">Не пришли</div><svg style="position:absolute;left:645px;top:24px" width="8" height="24" viewBox="0 0 8 24"><circle cx="4" cy="4" r="2.45" fill="#fff"/><circle cx="4" cy="12" r="2.45" fill="#fff"/><circle cx="4" cy="20" r="2.45" fill="#fff"/></svg></div>
</div>
<div style="position:absolute;left:1150px;top:1049px;width:686px;height:72px;"><div style="position:absolute;left:0;top:0;width:686px;height:72px;background:#1b2a5e;border-radius:22px;"></div><div style="position:absolute;left:31px;top:23.3px;font-size:28px;line-height:28px;color:#fff;white-space:nowrap;letter-spacing:-1px;transform:scaleX(0.925);transform-origin:0 0;">17:15 - 20:15</div><div style="position:absolute;left:187px;top:16px;height:40px;width:195px;padding:0 13px;box-sizing:border-box;background:#1f3c8f;border-radius:11px;color:#4f87f8;font-size:25px;line-height:41px;white-space:nowrap;-webkit-text-stroke:0.3px currentColor;">Подтверждено</div><svg style="position:absolute;left:646px;top:24px" width="8" height="24" viewBox="0 0 8 24"><circle cx="4" cy="4" r="2.45" fill="#fff"/><circle cx="4" cy="12" r="2.45" fill="#fff"/><circle cx="4" cy="20" r="2.45" fill="#fff"/></svg>
</div>
<div style="position:absolute;left:552px;top:1157px;width:686px;height:72px;"><div style="position:absolute;left:0;top:0;width:686px;height:72px;background:#1b2a5e;border-radius:22px;"></div><div style="position:absolute;left:31px;top:23.3px;font-size:28px;line-height:28px;color:#fff;white-space:nowrap;letter-spacing:-1px;transform:scaleX(0.925);transform-origin:0 0;">17:15 - 20:15</div><div style="position:absolute;left:187px;top:16px;height:40px;width:195px;padding:0 13px;box-sizing:border-box;background:#1f3c8f;border-radius:11px;color:#4f87f8;font-size:25px;line-height:41px;white-space:nowrap;-webkit-text-stroke:0.3px currentColor;">Подтверждено</div><svg style="position:absolute;left:646px;top:24px" width="8" height="24" viewBox="0 0 8 24"><circle cx="4" cy="4" r="2.45" fill="#fff"/><circle cx="4" cy="12" r="2.45" fill="#fff"/><circle cx="4" cy="20" r="2.45" fill="#fff"/></svg>
</div>
<div style="position:absolute;left:-418px;top:1265px;width:684px;height:72px;"><div style="position:absolute;left:0;top:0;width:684px;height:72px;background:#272727;border-radius:22px;"></div><div style="position:absolute;left:31px;top:23.3px;font-size:28px;line-height:28px;color:#fff;white-space:nowrap;letter-spacing:-1px;transform:scaleX(0.925);transform-origin:0 0;">17:15 - 20:15</div><div style="position:absolute;left:187px;top:16px;height:40px;width:195px;padding:0 13px;box-sizing:border-box;background:#3b3b3b;border-radius:11px;color:#8c8c8c;font-size:25px;line-height:41px;white-space:nowrap;-webkit-text-stroke:0.3px currentColor;">Подтверждено</div><svg style="position:absolute;left:644px;top:24px" width="8" height="24" viewBox="0 0 8 24"><circle cx="4" cy="4" r="2.45" fill="#fff"/><circle cx="4" cy="12" r="2.45" fill="#fff"/><circle cx="4" cy="20" r="2.45" fill="#fff"/></svg>
</div>
<div style="position:absolute;left:188px;top:1373px;width:685px;height:72px;"><div style="position:absolute;left:0;top:0;width:685px;height:72px;background:#321a55;border-radius:22px;"></div><div style="position:absolute;left:31px;top:23.3px;font-size:28px;line-height:28px;color:#fff;white-space:nowrap;letter-spacing:-1px;transform:scaleX(0.925);transform-origin:0 0;">17:15 - 20:15</div><div style="position:absolute;left:187px;top:16px;height:40px;width:143px;padding:0 13px;box-sizing:border-box;background:#4b2385;border-radius:11px;color:#9c5af7;font-size:25px;line-height:41px;white-space:nowrap;-webkit-text-stroke:0.3px currentColor;">За столом</div><svg style="position:absolute;left:645px;top:24px" width="8" height="24" viewBox="0 0 8 24"><circle cx="4" cy="4" r="2.45" fill="#fff"/><circle cx="4" cy="12" r="2.45" fill="#fff"/><circle cx="4" cy="20" r="2.45" fill="#fff"/></svg>
<div style="position:absolute;left:0;top:0;width:685px;height:72px;clip-path:inset(0 395px 0 0);"><div style="position:absolute;left:0;top:0;width:685px;height:72px;background:#272727;border-radius:22px;"></div><div style="position:absolute;left:31px;top:23.3px;font-size:28px;line-height:28px;color:#fff;white-space:nowrap;letter-spacing:-1px;transform:scaleX(0.925);transform-origin:0 0;">17:15 - 20:15</div><div style="position:absolute;left:187px;top:16px;height:40px;width:143px;padding:0 13px;box-sizing:border-box;background:#3b3b3b;border-radius:11px;color:#8c8c8c;font-size:25px;line-height:41px;white-space:nowrap;-webkit-text-stroke:0.3px currentColor;">За столом</div><svg style="position:absolute;left:645px;top:24px" width="8" height="24" viewBox="0 0 8 24"><circle cx="4" cy="4" r="2.45" fill="#fff"/><circle cx="4" cy="12" r="2.45" fill="#fff"/><circle cx="4" cy="20" r="2.45" fill="#fff"/></svg></div>
</div>
<div style="position:absolute;left:1784px;top:305px;width:48px;height:48px;background:#082a6b;border-radius:14px;"></div>
<svg style="position:absolute;left:1784px;top:305px;" width="48" height="48" viewBox="0 0 48 48" fill="none"><path d="M13.5 24H33.5M25 15.5L33.5 24L25 32.5" stroke="#4f87f8" stroke-width="3"/></svg>
<div style="position:absolute;left:1774px;top:521px;width:48px;height:48px;background:#663609;border-radius:14px;"></div>
<svg style="position:absolute;left:1774px;top:521px;" width="48" height="48" viewBox="0 0 48 48" fill="none"><path d="M13.5 24H33.5M25 15.5L33.5 24L25 32.5" stroke="#f7912f" stroke-width="3"/></svg>
<div style="position:absolute;left:922px;top:111px;width:6px;height:1370px;background:rgba(255,255,255,0.42);"></div>
<div style="position:absolute;left:922px;top:71px;width:6px;height:40px;background:#fff;"></div>
<div style="position:absolute;left:917px;top:57px;width:16px;height:16px;background:#fff;border-radius:50%;"></div>
<div style="position:absolute;left:425px;width:1000px;text-align:center;top:17.8px;font-size:25px;line-height:25px;color:#fff;white-space:nowrap;-webkit-text-stroke:0.6px currentColor;">12:30</div>
</div>
</div>
<div style="position:absolute;left:2248px;top:1132px;width:479px;height:623px;box-sizing:border-box;background:#1e2026;border:2px solid #3a3c42;border-radius:24px;">
<div style="position:absolute;left:22px;top:22px;width:40px;height:40px;background:#22a55b;border-radius:50%;"></div>
<div style="position:absolute;left:-458px;width:1000px;text-align:center;top:30.7px;font-size:24px;line-height:24px;color:#fff;white-space:nowrap;-webkit-text-stroke:0.6px currentColor;">A</div>
<div style="position:absolute;left:78px;top:30.3px;font-size:28px;line-height:28px;color:#fff;white-space:nowrap;-webkit-text-stroke:0.25px #fff;">Артур</div>
<div style="position:absolute;left:78px;top:65.7px;font-size:24px;line-height:24px;color:#8d8e92;white-space:nowrap;letter-spacing:-0.8px;transform:scaleX(0.95);transform-origin:0 0;">15:15 - 20:15</div>
<div style="position:absolute;left:10px;top:114px;width:456px;height:64px;background:#2f3136;border-radius:12px;"></div>
<div style="position:absolute;left:30px;top:133.3px;font-size:28px;line-height:28px;color:#fff;white-space:nowrap;-webkit-text-stroke:0.25px #fff;">Изменить дату</div>
<svg style="position:absolute;left:414px;top:124px;" width="40" height="40" viewBox="0 0 40 40" fill="none"><rect x="4.4" y="7.4" width="30.8" height="28" stroke="#8e9096" stroke-width="3.4"/><path d="M4.4 14.5H35.2M12.5 3.8V10M25.7 3.8V10" stroke="#8e9096" stroke-width="3.4"/></svg>
<div style="position:absolute;left:30px;top:205.3px;font-size:28px;line-height:28px;color:#fff;white-space:nowrap;-webkit-text-stroke:0.25px #fff;">Подробнее о брони</div>
<svg style="position:absolute;left:418px;top:202px;" width="32" height="32" viewBox="0 0 32 32" fill="none"><circle cx="16" cy="16" r="12" stroke="#8e9096" stroke-width="2.8"/><path d="M16 14.5V22" stroke="#8e9096" stroke-width="3.2" stroke-linecap="round"/><circle cx="16" cy="10.3" r="1.9" fill="#8e9096"/></svg>
<div style="position:absolute;left:30px;top:276.3px;font-size:28px;line-height:28px;color:#fff;white-space:nowrap;-webkit-text-stroke:0.25px #fff;">Сменить статус</div>
<svg style="position:absolute;left:422px;top:280px;" width="24" height="20" viewBox="0 0 24 20" fill="none"><path d="M3.5 5L12 13.5L20.5 5" stroke="#8e9096" stroke-width="2.8" stroke-linecap="round" stroke-linejoin="round"/></svg>
<div style="position:absolute;left:86px;top:348.3px;font-size:28px;line-height:28px;color:#a3a3a6;white-space:nowrap;">За столом</div>
<div style="position:absolute;left:86px;top:420.3px;font-size:28px;line-height:28px;color:#a3a3a6;white-space:nowrap;">Не пришли</div>
<div style="position:absolute;left:86px;top:492.3px;font-size:28px;line-height:28px;color:#a3a3a6;white-space:nowrap;">Подтверждено</div>
<div style="position:absolute;left:30px;top:564.3px;font-size:28px;line-height:28px;color:#fff;white-space:nowrap;-webkit-text-stroke:0.25px #fff;">Отменить бронь</div>
<svg style="position:absolute;left:420px;top:564px;" width="28" height="28" viewBox="0 0 28 28" fill="none"><path d="M4 4L24 24M24 4L4 24" stroke="#8e9096" stroke-width="3"/></svg>
</div>
<svg style="position:absolute;left:2458px;top:1286px;" width="46" height="46" viewBox="0 0 46 46" fill="none"><g transform="scale(1.15)"><path d="M9 4.5Q9 2 11.3 2Q13.5 2 13.5 4.5V17L14.5 11.5Q16.8 10.5 18 12.5L18.5 14Q20.8 13 22 15L22.5 16Q25 15.5 26 17.5Q27.5 20 27 25Q26 31 22.5 34.5H11.5Q8 30 4.5 26Q2 23 3.5 21.5Q5 20 7.5 22L9 23.5Z" fill="#111" stroke="#fff" stroke-width="1.6" stroke-linejoin="round"/><path d="M14.5 25V31M18 25V31M21.5 25V31" stroke="#fff" stroke-width="1.6"/></g></svg>
</body></html>
